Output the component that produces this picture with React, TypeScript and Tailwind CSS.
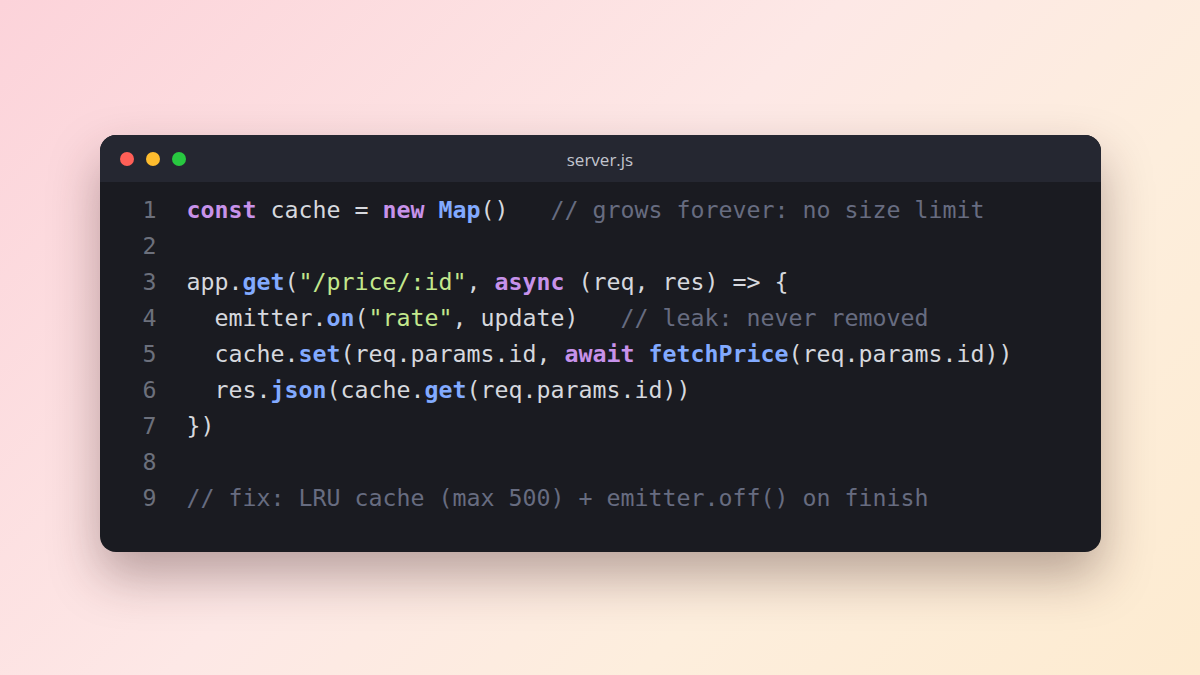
import React from "react";

type Tok = [string, string?];

const K = "text-[#c792ea] font-bold";
const F = "text-[#82aaff] font-bold";
const S = "text-[#c3e88d]";
const C = "text-[#676c80]";

const lines: Tok[][] = [
  [["const", K], [" cache = "], ["new", K], [" "], ["Map", F], ["()"], ["   "], ["// grows forever: no size limit", C]],
  [],
  [["app."], ["get", F], ["("], ['"/price/:id"', S], [", "], ["async", K], [" (req, res) => {"]],
  [["  emitter."], ["on", F], ["("], ['"rate"', S], [", update)"], ["   "], ["// leak: never removed", C]],
  [["  cache."], ["set", F], ["(req.params.id, "], ["await", K], [" "], ["fetchPrice", F], ["(req.params.id))"]],
  [["  res."], ["json", F], ["(cache."], ["get", F], ["(req.params.id))"]],
  [["})"]],
  [],
  [["// fix: LRU cache (max 500) + emitter.off() on finish", C]],
];

export default function App() {
  return (
    <div className="w-[1200px] h-[675px] flex items-center justify-center bg-[linear-gradient(135deg,#fcd3da_0%,#fde8e6_45%,#fdeedd_70%,#fdebd0_100%)]">
      <div className="w-[1001px] mt-[12px] rounded-[16px] overflow-hidden bg-[#1a1b21] shadow-[0_24px_50px_rgba(60,30,30,0.35)]">
        <div className="relative h-[47px] bg-[#252731] flex items-center px-[20px]">
          <div className="flex gap-[12px]">
            <span className="w-[14px] h-[14px] rounded-full bg-[#ff5f57]" />
            <span className="w-[14px] h-[14px] rounded-full bg-[#febc2e]" />
            <span className="w-[14px] h-[14px] rounded-full bg-[#28c840]" />
          </div>
          <div className="absolute inset-0 flex items-center justify-center text-[17px] text-[#c2c5ce] font-['Open_Sans',sans-serif] pt-[2px]">
            server.js
          </div>
        </div>
        <div className="pt-[10px] pb-[36px] font-['DejaVu_Sans_Mono',monospace] text-[23.25px] leading-[36px] text-[#d6d8de]">
          {lines.map((toks, i) => (
            <div key={i} className="flex h-[36px]">
              <div className="w-[57px] text-right text-[#6c707c]">{i + 1}</div>
              <div className="pl-[30px] whitespace-pre">
                {toks.map(([t, cls], j) => (
                  <span key={j} className={cls}>
                    {t}
                  </span>
                ))}
              </div>
            </div>
          ))}
        </div>
      </div>
    </div>
  );
}
